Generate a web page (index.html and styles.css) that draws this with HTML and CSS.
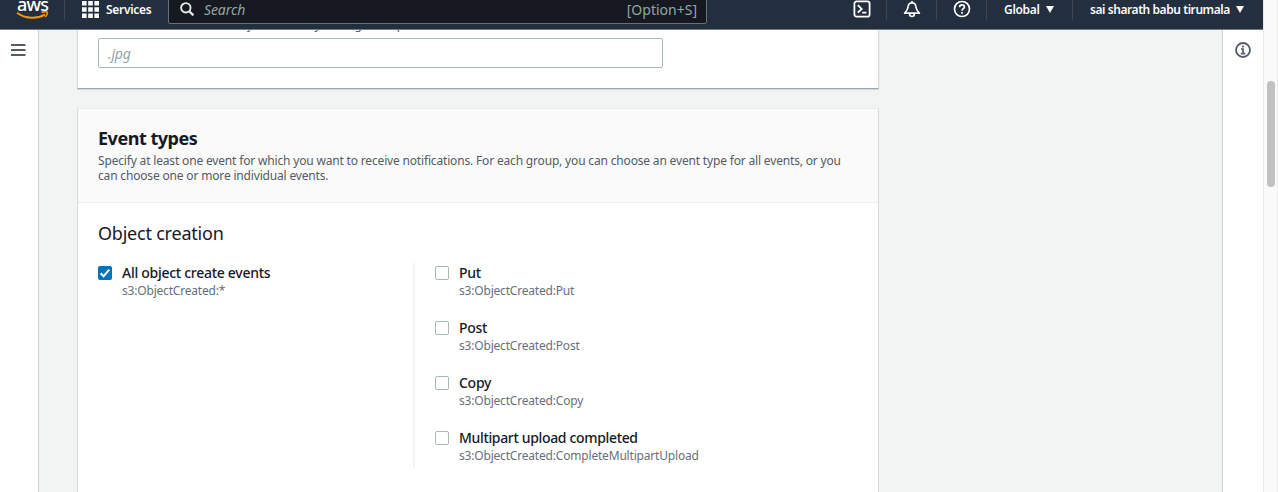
FILE: index.html
```html
<!DOCTYPE html>
<html lang="en">
<head>
<meta charset="utf-8">
<title>Event notifications</title>
<link rel="stylesheet" href="styles.css">
</head>
<body>
<div class="window">
  <div class="app">
    <header class="topbar">
      <div class="topbar-row">
        <div class="logo">
          <span class="logo-text">aws</span>
          <svg class="smile" width="33" height="9" viewBox="0 0 33 9"><path d="M1 1.800C9.500 8 21 8.200 29 3.600" fill="none" stroke="#f90" stroke-width="1.900"/><path d="M25.500 1.500C28 .5 31 .4 31.300 1.200C31.700 2.100 30.600 4.800 29.200 6" fill="none" stroke="#f90" stroke-width="1.500"/></svg>
        </div>
        <div class="services">
          <svg width="17" height="17" viewBox="0 0 17 17" fill="#fff"><path d="M0 0h4.600v4.600H0zM6.200 0h4.600v4.600H6.200zM12.400 0H17v4.600h-4.600zM0 6.200h4.600v4.600H0zM6.200 6.200h4.600v4.600H6.200zM12.400 6.200H17v4.600h-4.600zM0 12.400h4.600V17H0zM6.200 12.400h4.600V17H6.200zM12.400 12.400H17V17h-4.600z"/></svg>
          <span class="nav-text">Services</span>
        </div>
        <div class="search">
          <svg width="14" height="14" viewBox="0 0 14 14" fill="none" stroke="#e3eaea" stroke-width="1.900"><circle cx="5.800" cy="5.800" r="4.700"/><path d="M9.200 9.200l4.200 4.200" stroke-width="2.300"/></svg>
          <span class="search-hint">Search</span>
          <span class="shortcut">[Option+S]</span>
        </div>
        <div class="icons">
          <div class="icon-cell"><svg width="18" height="18" viewBox="0 0 18 18" fill="none" stroke="#fff" stroke-width="1.800"><rect x="1.400" y="1.400" width="15.200" height="15.200" rx="2.200"/><path d="M4.800 5.200l3.900 3.700-3.900 3.700M9.200 12.700h4.200"/></svg></div>
          <div class="icon-cell"><svg width="18" height="18" viewBox="0 0 18 18" fill="none" stroke="#fff" stroke-width="1.700" stroke-linejoin="round"><path d="M9 1v2M1.600 13.100C3.500 11.500 4.900 9.300 5.100 6.800C5.300 4.300 6.800 2.900 9 2.900s3.700 1.400 3.900 3.900c.2 2.500 1.600 4.700 3.500 6.300zM6.700 13.300v1c0 1.300.9 2.200 2.300 2.200s2.300-.9 2.300-2.200v-1"/></svg></div>
          <div class="icon-cell"><svg width="18" height="18" viewBox="0 0 18 18" fill="none" stroke="#fff" stroke-width="1.700"><circle cx="9" cy="9" r="7.500"/><path d="M6.600 7.200C6.600 5.600 7.600 4.800 9 4.800s2.400.8 2.400 2.100C11.400 8.700 9 8.600 9 10.800M9 12v1.800"/></svg></div>
          <div class="menu region"><span class="nav-text">Global</span><i class="caret"></i></div>
          <div class="menu account"><span class="nav-text name">sai sharath babu tirumala</span><i class="caret"></i></div>
        </div>
      </div>
    </header>
    <div class="body">
      <aside class="left"><svg width="15" height="12" viewBox="0 0 15 12" stroke="#545b64" stroke-width="2"><path d="M0 1h14.500M0 6h14.500M0 11h14.500"/></svg></aside>
      <main class="content">
        <section class="card suffix">
          <p class="hint">Limit the notifications to objects with key ending with specified characters.</p>
          <div class="input">.jpg</div>
        </section>
        <section class="card">
          <div class="card-head">
            <h2>Event types</h2>
            <p class="desc">Specify at least one event for which you want to receive notifications. For each group, you can choose an event type for all events, or you<br>can choose one or more individual events.</p>
          </div>
          <div class="card-body">
            <h3>Object creation</h3>
            <div class="columns">
              <div class="all">
                <div class="option"><span class="box checked"><svg width="14" height="14" viewBox="0 0 14 14"><path d="M2.600 7.300l3 3L11.200 3.600" fill="none" stroke="#fff" stroke-width="2"/></svg></span><div><div class="label">All object create events</div><div class="code">s3:ObjectCreated:*</div></div></div>
              </div>
              <div class="list">
                <div class="option"><span class="box"></span><div><div class="label">Put</div><div class="code">s3:ObjectCreated:Put</div></div></div>
                <div class="option"><span class="box"></span><div><div class="label">Post</div><div class="code">s3:ObjectCreated:Post</div></div></div>
                <div class="option"><span class="box"></span><div><div class="label">Copy</div><div class="code">s3:ObjectCreated:Copy</div></div></div>
                <div class="option"><span class="box"></span><div><div class="label multi">Multipart upload completed</div><div class="code">s3:ObjectCreated:CompleteMultipartUpload</div></div></div>
              </div>
            </div>
          </div>
        </section>
      </main>
      <aside class="right"><svg width="16" height="16" viewBox="0 0 16 16" fill="none" stroke="#545b64"><circle cx="8" cy="8" r="7" stroke-width="1.800"/><path d="M8 3.500v2M6 7h2v4.400M5.800 11.600h4.500" stroke-width="1.700"/></svg></aside>
    </div>
  </div>
  <div class="scrollbar"><div class="thumb"></div></div>
</div>
</body>
</html>
```
FILE: styles.css
```css
* { box-sizing: border-box; margin: 0; padding: 0; }
body { font-family: "Noto Sans", sans-serif; font-size: 12px; color: #16191f; overflow: hidden; }
svg { display: block; flex: none; }
.window { display: flex; width: 1278px; height: 492px; overflow: hidden; }
.app { display: flex; flex-direction: column; width: 1263px; }

.topbar { height: 30px; flex: none; background: #232f3e; border-bottom: 1px solid #717985; overflow: hidden; }
.topbar-row { display: flex; align-items: center; height: 40px; margin-top: -11px; }
.logo { width: 65px; height: 22px; padding-left: 16px; border-right: 1px solid #414750; display: flex; flex-direction: column; justify-content: flex-end; }
.logo-text { font-size: 18px; line-height: 18px; font-weight: 500; color: #fff; letter-spacing: -.8px; padding-left: 1px; margin-bottom: -2px; }
.services { width: 103px; display: flex; align-items: center; gap: 7px; padding-left: 17px; }
.nav-text { font-size: 12px; font-weight: 600; letter-spacing: -.3px; color: #fafafa; white-space: nowrap; }
.search { display: flex; align-items: center; width: 539px; height: 30px; padding: 0 9px 0 11px; border: 1px solid #687078; border-radius: 2px; background: #16191f; color: #95a5a6; font-size: 14px; }
.search-hint { font-style: italic; margin-left: 10px; letter-spacing: -.1px; }
.shortcut { margin-left: auto; }
.icons { display: flex; align-items: center; margin-left: 130px; }
.icon-cell { width: 50px; height: 22px; display: flex; align-items: center; justify-content: center; border-right: 1px solid #414750; }
.menu { display: flex; align-items: center; height: 22px; }
.region { width: 86px; padding-left: 17px; border-right: 1px solid #414750; gap: 6px; }
.account { padding-left: 17px; gap: 6px; }
.name { letter-spacing: -.43px; }
.caret { width: 0; height: 0; border: 4px solid transparent; border-top: 7px solid #fff; border-bottom: 0; }

.body { display: flex; flex: 1; min-height: 0; background: #f2f3f3; }
.left { width: 39px; padding: 14px 0 0 11px; background: #fff; border-right: 1px solid #cdd3d4; }
.content { flex: 1; padding-left: 38px; overflow: hidden; }
.right { width: 41px; padding: 12px 0 0 12px; background: #fff; border-left: 1px solid #cdd3d4; }

.card { width: 802px; background: #fff; border: 1px solid #d5dbdb; border-top-color: #eaeded; }
.suffix { display: flow-root; height: 59px; border-top: 0; border-bottom-color: #9ba7ac; box-shadow: 0 1px 1px #d5dbdb; padding: 0 20px; margin-bottom: 19px; }
.hint { height: 21px; line-height: 16px; margin-top: -13px; color: #545b64; letter-spacing: -.18px; }
.input { height: 30px; width: 565px; line-height: 29px; padding-left: 9px; border: 1px solid #aab7b8; border-radius: 2px; color: #95a5a6; font-size: 14px; font-style: italic; letter-spacing: -.2px; }
.card-head { height: 94px; padding: 18px 19px 0; background: #fafafa; border-bottom: 1px solid #eaeded; }
h2 { font-size: 18px; line-height: 22px; font-weight: 700; letter-spacing: -.48px; padding-left: 1px; }
.desc { margin-top: 4px; padding-left: 1px; line-height: 15px; color: #545b64; letter-spacing: -.17px; white-space: nowrap; }
.card-body { padding: 19px 20px 40px; }
h3 { font-size: 18px; line-height: 22px; font-weight: 400; letter-spacing: -.22px; }
.columns { display: flex; margin-top: 19px; }
.all { width: 315px; }
.list { display: flex; flex-direction: column; gap: 19px; padding-left: 20px; border-left: 2px solid #f2f3f3; height: 205px; }
.option { display: flex; gap: 10px; height: 36px; }
.box { flex: none; width: 14px; height: 14px; margin-top: 3px; border: 1px solid #aab7b8; border-radius: 2px; }
.box.checked { border: 0; background: #0073bb; }
.label { font-size: 14px; line-height: 20px; font-weight: 500; letter-spacing: -.28px; white-space: nowrap; }
.multi { letter-spacing: -.34px; }
.code { line-height: 16px; color: #687078; letter-spacing: -.19px; white-space: nowrap; }

.scrollbar { width: 15px; padding: 81px 0 0 3px; background: #fafafa; border-left: 1px solid #e8e8e8; border-right: 1px solid #ededed; }
.thumb { width: 8px; height: 106px; border-radius: 4px; background: #c1c1c1; }
```
